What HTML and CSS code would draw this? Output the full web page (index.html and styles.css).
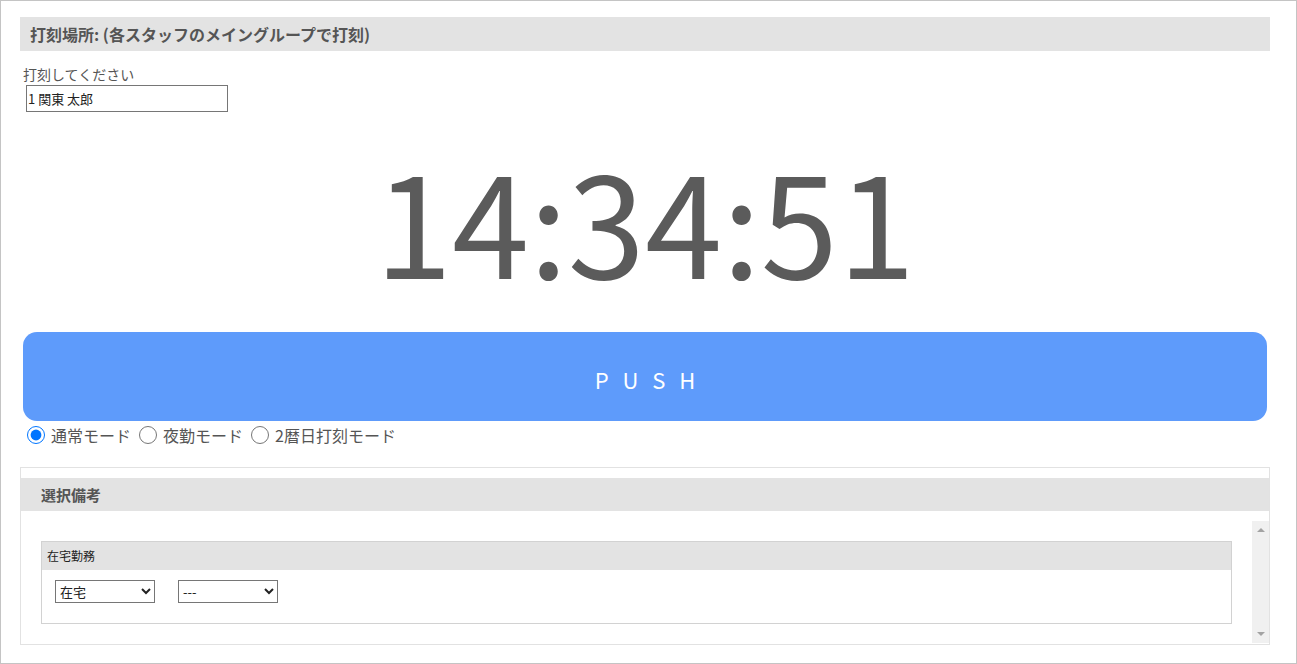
FILE: index.html
```html
<!DOCTYPE html>
<html lang="ja">
<head>
    <meta charset="UTF-8">
    <meta name="viewport" content="width=device-width, initial-scale=1.0">
    <title>打刻</title>
    <link rel="stylesheet" href="styles.css">
</head>
<body>
    <div class="page">
        <div class="bar">打刻場所: (各スタッフのメイングループで打刻)</div>

        <div class="staff">
            <label for="staffInput">打刻してください</label>
            <input type="text" id="staffInput" value="1 関東 太郎" />
        </div>

        <div class="clock" id="clock">14:34:51</div>

        <button class="push-button">PUSH</button>

        <div class="modes">
            <label><input type="radio" name="mode" checked />通常モード</label>
            <label><input type="radio" name="mode" />夜勤モード</label>
            <label><input type="radio" name="mode" />2暦日打刻モード</label>
        </div>

        <div class="panel">
            <div class="panel-bar">選択備考</div>
            <div class="panel-body">
                <div class="panel-content">
                    <div class="remark-box">
                        <div class="remark-head">在宅勤務</div>
                        <div class="remark-row">
                            <select>
                                <option>在宅</option>
                                <option>出社</option>
                            </select>
                            <select>
                                <option>---</option>
                            </select>
                        </div>
                    </div>
                </div>
                <div class="scroll-track">
                    <span class="arrow-up"></span>
                    <span class="arrow-down"></span>
                </div>
            </div>
        </div>
    </div>
</body>
</html>
```

FILE: styles.css
```css
* {
    box-sizing: border-box;
}

body {
    margin: 0;
    font-family: "Noto Sans CJK JP", "Noto Sans", sans-serif;
    color: #555555;
    background-color: #ffffff;
}

.page {
    width: 1297px;
    height: 664px;
    border: 1px solid #c4c4c4;
    padding: 16px 26px 0 19px;
    overflow: hidden;
}

.bar {
    background-color: #e3e3e3;
    height: 34px;
    line-height: 34px;
    padding-left: 10px;
    font-size: 16px;
    font-weight: bold;
    color: #555555;
}

.staff {
    margin-top: 15px;
    padding-left: 3px;
}

.staff label {
    display: block;
    font-size: 14px;
    line-height: 16px;
}

.staff input {
    display: block;
    margin: 3px 0 0 3px;
    width: 202px;
    height: 27px;
    border: 1px solid #767676;
    padding: 0 1px;
    font-family: inherit;
    font-size: 13px;
    color: #222222;
    outline: none;
}

.clock {
    text-align: center;
    font-size: 139px;
    line-height: 1;
    margin-top: 37px;
    height: 183px;
    color: #5b5b5b;
}

.push-button {
    display: block;
    width: 1244px;
    height: 89px;
    margin: 0 3px;
    padding: 4px 0 0 0;
    border: none;
    border-radius: 14px;
    background-color: #5e9bfb;
    color: #ffffff;
    font-family: inherit;
    font-size: 22px;
    letter-spacing: 14px;
    text-indent: 14px;
    cursor: pointer;
}

.modes {
    display: flex;
    align-items: center;
    gap: 8px;
    margin: 2px 0 0 7px;
    font-size: 16px;
    line-height: 24px;
}

.modes label {
    display: flex;
    align-items: center;
}

.modes input {
    width: 18px;
    height: 18px;
    margin: 0 6px 0 0;
}

.panel {
    margin-top: 20px;
    border: 1px solid #e2e2e2;
    height: 178px;
    padding-top: 10px;
}

.panel-bar {
    background-color: #e3e3e3;
    height: 33px;
    line-height: 33px;
    padding-left: 20px;
    font-size: 15px;
    font-weight: bold;
}

.panel-body {
    display: flex;
    margin-top: 10px;
    height: 122px;
}

.panel-content {
    flex: 1;
    padding: 20px 20px 0 20px;
}

.scroll-track {
    width: 17px;
    background-color: #f0f0f0;
    display: flex;
    flex-direction: column;
    align-items: center;
    justify-content: space-between;
    padding: 7px 0 7px 0;
}

.arrow-up {
    width: 0;
    height: 0;
    border-left: 4px solid transparent;
    border-right: 4px solid transparent;
    border-bottom: 4px solid #a3a3a3;
}

.arrow-down {
    width: 0;
    height: 0;
    border-left: 4px solid transparent;
    border-right: 4px solid transparent;
    border-top: 4px solid #a3a3a3;
}

.remark-box {
    border: 1px solid #d2d2d2;
    height: 83px;
}

.remark-head {
    background-color: #e3e3e3;
    height: 28px;
    line-height: 28px;
    padding-left: 5px;
    font-size: 12px;
    color: #222222;
}

.remark-row {
    display: flex;
    gap: 23px;
    padding: 10px 0 0 13px;
}

.remark-row select {
    width: 100px;
    height: 23px;
    border: 1px solid #767676;
    border-radius: 0;
    font-family: inherit;
    font-size: 13px;
    color: #222222;
    background-color: #ffffff;
}
```
